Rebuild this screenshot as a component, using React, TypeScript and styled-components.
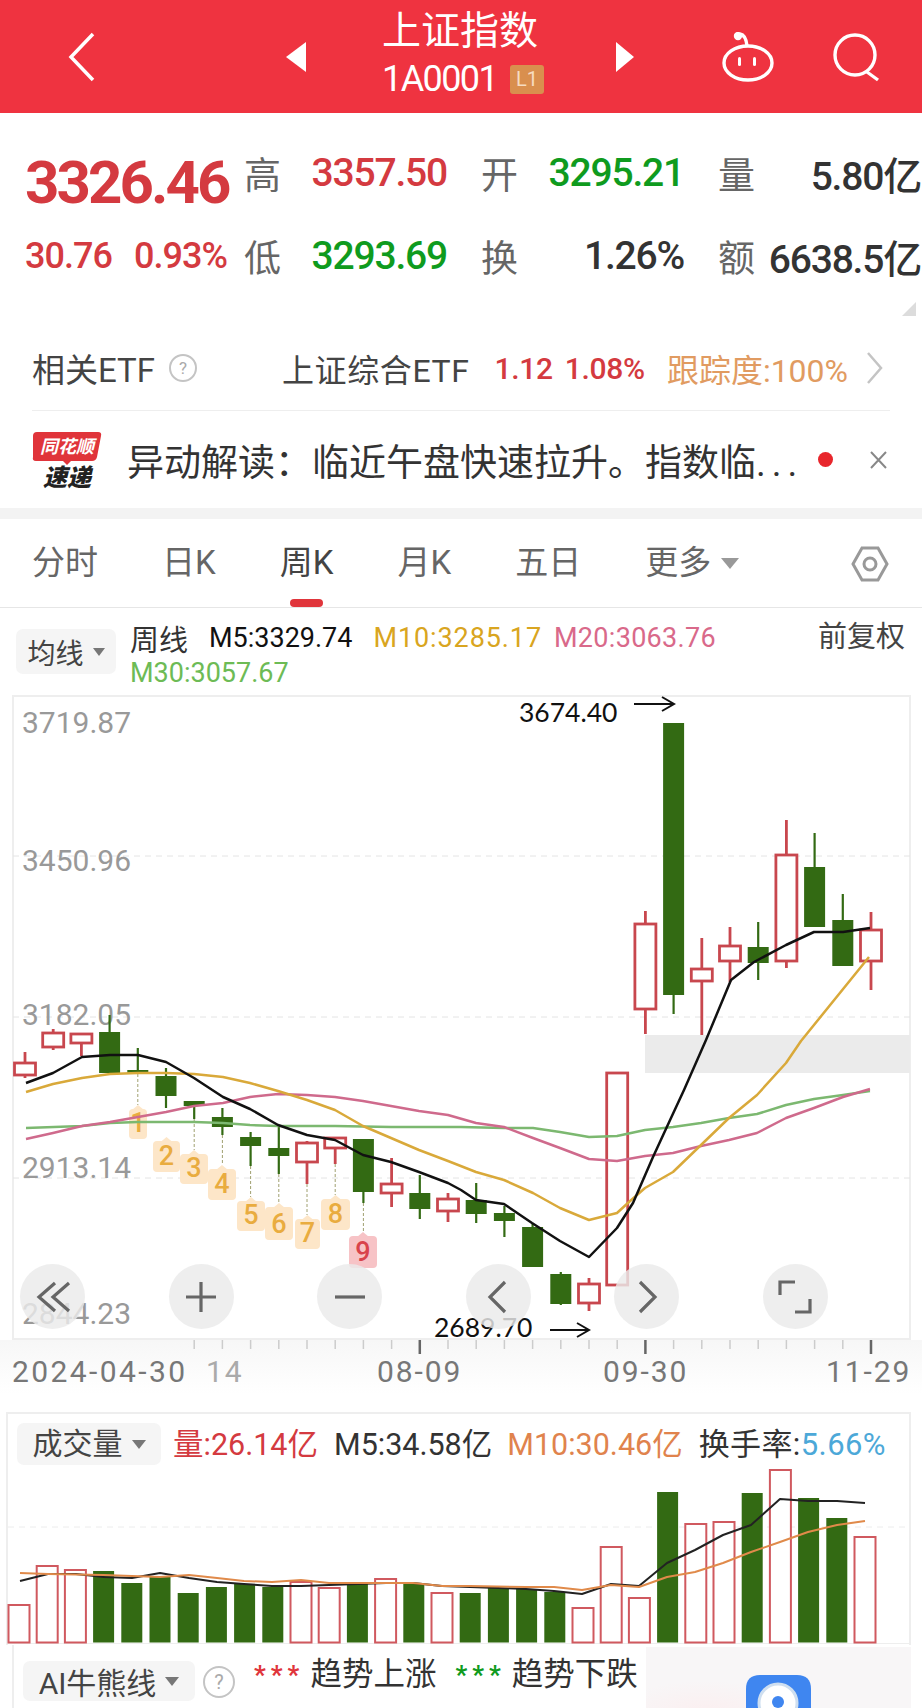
import React from 'react';
import styled, { createGlobalStyle } from 'styled-components';

const RED = '#d43a40';
const GREEN = '#0f9b1e';
const CANDLE_RED = '#c8474e';
const CANDLE_GREEN = '#336a13';

const GlobalStyle = createGlobalStyle`
  *, *::before, *::after {
    box-sizing: border-box;
  }
  html, body {
    margin: 0;
    padding: 0;
    background: #fff;
    overflow: hidden;
  }
  body {
    font-family: Roboto, "Noto Sans CJK SC", sans-serif;
  }
`;

const Page = styled.div`
  width: 922px;
  height: 1708px;
  overflow: hidden;
  position: relative;
  background: #fff;
`;

/* header */
const Header = styled.header`
  height: 113px;
  background: #ef3340;
  display: flex;
  align-items: center;
  color: #fff;
`;

const NavIcon = styled.svg<{ $left: number }>`
  margin-left: ${(p) => p.$left}px;
  flex: none;
`;

const TitleBlock = styled.div`
  width: 162px;
  margin-left: 76px;
  height: 113px;
  display: flex;
  flex-direction: column;
`;

const Title = styled.div`
  font-size: 39px;
  line-height: 44px;
  margin-top: 9px;
  height: 50px;
`;

const CodeRow = styled.div`
  display: flex;
  align-items: center;
  gap: 13px;
  font-size: 36px;
  letter-spacing: -1.6px;
  line-height: 40px;
`;

const LevelBadge = styled.span`
  width: 37px;
  height: 29px;
  background: #d98f4e;
  color: #f7dcc0;
  border-radius: 3px;
  font-size: 20px;
  letter-spacing: 0;
  line-height: 29px;
  text-align: center;
`;

/* quote */
const Stats = styled.section`
  position: relative;
  height: 213px;
  padding: 18px 0 0 25px;
  display: grid;
  grid-template-columns: 185px repeat(3, 203px);
  grid-auto-rows: 83px;
  column-gap: 34px;
`;

const Price = styled.div`
  font-size: 60px;
  line-height: 60px;
  font-weight: 700;
  color: ${RED};
  align-self: end;
  margin-bottom: 1px;
  letter-spacing: -2.9px;
  white-space: nowrap;
`;

const Change = styled.div`
  display: flex;
  justify-content: space-between;
  align-items: center;
  width: 202px;
  font-size: 36px;
  font-weight: 500;
  letter-spacing: -1px;
  color: ${RED};
`;

const Stat = styled.div`
  display: flex;
  justify-content: space-between;
  align-items: center;
`;

const StatLabel = styled.span`
  font-size: 37px;
  color: #666;
`;

const StatValue = styled.span<{ $color?: string }>`
  font-size: 39px;
  font-weight: 500;
  letter-spacing: -1.2px;
  color: ${(p) => p.$color || '#333'};
`;

const Corner = styled.i`
  position: absolute;
  right: 6px;
  bottom: 10px;
  width: 14px;
  height: 14px;
  background: #dcdcdc;
  clip-path: polygon(100% 0, 100% 100%, 0 100%);
`;

/* etf row */
const EtfRow = styled.section`
  height: 85px;
  margin: 0 32px;
  border-bottom: 1px solid #eee;
  display: flex;
  align-items: center;
  font-size: 33px;
  color: #444;
`;

const Help = styled.span<{ $size: number }>`
  width: ${(p) => p.$size}px;
  height: ${(p) => p.$size}px;
  border: 2px solid #c4c4c4;
  border-radius: 50%;
  color: #aaa;
  font-size: ${(p) => Math.round(p.$size * 0.62)}px;
  line-height: ${(p) => p.$size - 4}px;
  text-align: center;
  display: block;
  flex: none;
`;

const EtfHelp = styled.div`
  margin-left: 14px;
`;

const EtfName = styled.span`
  margin-left: 85px;
  font-size: 32px;
  letter-spacing: 0.6px;
`;

const EtfQuote = styled.span<{ $left: number }>`
  margin-left: ${(p) => p.$left}px;
  font-size: 30px;
  font-weight: 500;
  letter-spacing: -0.3px;
  color: ${RED};
`;

const EtfTrack = styled.span`
  margin-left: 22px;
  font-size: 32px;
  color: #e19b61;
  white-space: nowrap;
`;

/* news row */
const NewsRow = styled.section`
  height: 97px;
  padding-left: 32px;
  display: flex;
  align-items: center;
  color: #333;
`;

const LogoSvg = styled.svg`
  overflow: visible;
  flex: none;
`;

const NewsText = styled.div`
  margin-left: 25px;
  width: 677px;
  font-size: 37px;
  white-space: nowrap;
`;

const NewsEllipsis = styled.span`
  letter-spacing: 6px;
`;

const NewsDot = styled.i`
  margin-left: 14px;
  width: 15px;
  height: 15px;
  border-radius: 50%;
  background: #e8262c;
`;

const Band = styled.div`
  height: 11px;
  background: #f3f3f3;
`;

/* tabs */
const Tabs = styled.nav`
  height: 89px;
  border-bottom: 1px solid #e6e6e6;
  padding-left: 32px;
  display: flex;
  gap: 64px;
  position: relative;
`;

const Tab = styled.div<{ $active?: boolean }>`
  position: relative;
  font-size: 33px;
  line-height: 88px;
  color: ${(p) => (p.$active ? '#444' : '#666')};
  &::after {
    content: '';
    display: ${(p) => (p.$active ? 'block' : 'none')};
    position: absolute;
    bottom: 0;
    left: 50%;
    margin-left: -17px;
    width: 33px;
    height: 8px;
    border-radius: 4px;
    background: #e0353b;
  }
`;

const Caret = styled.i<{ $size: number; $color?: string }>`
  display: inline-block;
  border-left: ${(p) => p.$size}px solid transparent;
  border-right: ${(p) => p.$size}px solid transparent;
  border-top: ${(p) => Math.round(p.$size * 1.25)}px solid ${(p) => p.$color || '#777'};
`;

const MoreTab = styled(Tab)`
  display: flex;
  align-items: center;
  gap: 10px;
`;

const SettingsIcon = styled.svg`
  position: absolute;
  left: 851px;
  top: 26px;
`;

/* legend */
const Legend = styled.section`
  height: 87px;
  display: flex;
  align-items: flex-start;
  padding: 12px 17px 0 16px;
`;

const Dropdown = styled.div<{ $width: number; $height: number; $font: number }>`
  width: ${(p) => p.$width}px;
  height: ${(p) => p.$height}px;
  background: #f5f5f5;
  border-radius: 7px;
  display: flex;
  align-items: center;
  justify-content: center;
  gap: 9px;
  font-size: ${(p) => p.$font}px;
  color: #444;
  flex: none;
  white-space: nowrap;
`;

const LegendDropdown = styled(Dropdown)`
  margin-top: 9px;
`;

const MaBlock = styled.div`
  margin-left: 14px;
  flex: 1;
`;

const MaLine = styled.div`
  display: flex;
  align-items: center;
  height: 35px;
  font-size: 27px;
  gap: 21px;
`;

const MaText = styled.span<{ $color: string; $wide?: boolean; $track?: number; $pull?: number }>`
  color: ${(p) => p.$color};
  font-size: ${(p) => (p.$wide ? 29 : 27)}px;
  letter-spacing: ${(p) => p.$track || 0}px;
  margin-left: ${(p) => p.$pull || 0}px;
  white-space: nowrap;
`;

const Adjust = styled.div`
  font-size: 29px;
  line-height: 35px;
  color: #444;
`;

/* chart */
const ChartPanel = styled.section`
  position: relative;
  margin-left: 12px;
  width: 899px;
  height: 645px;
`;

const ChartSvg = styled.svg`
  display: block;
  overflow: visible;
`;

const Controls = styled.div`
  position: absolute;
  left: 8px;
  top: 569px;
  display: flex;
  gap: 83.6px;
`;

const RoundButton = styled.div`
  width: 65px;
  height: 65px;
  border-radius: 50%;
  background: rgba(234, 234, 234, 0.82);
  display: flex;
  align-items: center;
  justify-content: center;
`;

const XAxis = styled.div`
  height: 72px;
  padding: 14px 0 0 12px;
  display: grid;
  grid-template-columns: 194px 171px 226px 223px 1fr;
  font-size: 30px;
  letter-spacing: 1.9px;
  line-height: 36px;
  color: #777;
  background: linear-gradient(180deg, #f7f7f7 0, #fff 75%);
`;

const XLabel = styled.span<{ $faded?: boolean; $spread?: boolean }>`
  color: ${(p) => (p.$faded ? '#aaa' : '#777')};
  letter-spacing: ${(p) => (p.$spread ? 2.4 : 1.9)}px;
  white-space: nowrap;
`;

/* volume */
const VolumePanel = styled.section`
  margin-left: 6px;
  width: 905px;
  height: 233px;
  border: 2px solid #eee;
  border-bottom: 0;
`;

const VolumeHead = styled.div`
  height: 56px;
  padding: 9px 0 0 9px;
  display: flex;
  align-items: flex-start;
  font-size: 30.5px;
  line-height: 44px;
  color: #333;
  white-space: nowrap;
`;

const VolumeItem = styled.span<{ $color?: string; $left: number }>`
  margin-left: ${(p) => p.$left}px;
  color: ${(p) => p.$color || '#333'};
`;

const TurnoverItem = styled(VolumeItem)`
  font-size: 31px;
  letter-spacing: 0.4px;
`;

const Turnover = styled.span`
  color: #4ca8d8;
`;

/* bottom */
const BottomBar = styled.section`
  margin: 0 11px 0 12px;
  height: 63px;
  border-left: 2px solid #eee;
  display: flex;
  align-items: flex-start;
`;

const BottomDropdown = styled(Dropdown)`
  margin: 16px 0 0 9px;
`;

const BottomHelp = styled.div`
  margin: 21px 0 0 8px;
  flex: none;
`;

const Trend = styled.div<{ $left: number }>`
  display: flex;
  align-items: center;
  gap: 6px;
  margin: 8px 0 0 ${(p) => p.$left}px;
  font-size: 31.5px;
  line-height: 44px;
  color: #333;
  white-space: nowrap;
  flex: none;
`;

const TrendStars = styled.span<{ $color: string }>`
  color: ${(p) => p.$color};
  font-size: 26px;
  font-weight: 700;
  letter-spacing: 5px;
`;

const Promo = styled.div`
  margin-left: auto;
  margin-top: 2px;
  width: 265px;
  height: 61px;
  padding: 28px 0 0 100px;
  background: radial-gradient(ellipse 90px 30px at 60px 64px, #fbeff0, #f8f6f7 100%);
`;

type Candle = [boolean, number, number, number, number];

// [up, body top, body bottom, wick top, wick bottom] in page px
const candles: Candle[] = [
  [true, 1063, 1075, 1052, 1078],
  [true, 1033, 1047, 1029, 1050],
  [true, 1034, 1043, 1033, 1056],
  [false, 1032, 1073, 1015, 1073],
  [false, 1070, 1073, 1048, 1074],
  [false, 1076, 1096, 1068, 1108],
  [false, 1101, 1106, 1101, 1119],
  [false, 1117, 1127, 1108, 1135],
  [false, 1137, 1146, 1132, 1166],
  [false, 1148, 1156, 1127, 1174],
  [true, 1143, 1162, 1141, 1184],
  [true, 1138, 1148, 1137, 1164],
  [false, 1139, 1192, 1139, 1203],
  [true, 1184, 1193, 1158, 1207],
  [false, 1193, 1209, 1175, 1219],
  [true, 1199, 1211, 1193, 1222],
  [false, 1200, 1214, 1183, 1223],
  [false, 1213, 1221, 1206, 1237],
  [false, 1227, 1267, 1224, 1267],
  [false, 1274, 1304, 1272, 1305],
  [true, 1284, 1303, 1278, 1311],
  [true, 1073, 1285, 1073, 1285],
  [true, 924, 1009, 911, 1034],
  [false, 723, 995, 723, 1014],
  [true, 969, 981, 938, 1035],
  [true, 946, 961, 927, 982],
  [false, 947, 963, 922, 980],
  [true, 855, 961, 820, 968],
  [false, 867, 927, 833, 927],
  [false, 920, 966, 894, 966],
  [true, 930, 961, 912, 990],
];

const candleX = (i: number) => 25 + 28.2 * i;

const ma5 = '26,1083 53,1073 82,1057 110,1055 138,1055 166,1062 194,1078 223,1097 250,1109 278,1125 307,1135 335,1140 363,1155 391,1162 419,1172 448,1183 461,1190 476,1200 504,1204 532,1223 560,1241 589,1257 617,1228 633,1203 653,1157 671,1118 684,1090 706,1040 731,980 754,962 786,945 814,932 843,932 870,928';
const ma10 = '26,1092 53,1084 82,1078 110,1074 138,1073 166,1073 194,1074 223,1077 250,1083 278,1091 307,1100 335,1110 363,1126 391,1138 419,1150 448,1161 476,1172 504,1180 533,1193 560,1208 589,1220 617,1213 629,1202 645,1188 673,1172 701,1145 729,1118 757,1095 786,1063 801,1041 869,957';
const ma20 = '26,1139 53,1133 82,1126 110,1122 138,1117 166,1112 194,1106 223,1103 250,1097 278,1094 307,1095 335,1097 363,1101 391,1106 419,1111 448,1115 476,1123 504,1127 533,1138 560,1148 589,1159 617,1161 645,1156 673,1153 701,1146 729,1140 757,1133 786,1118 814,1108 843,1097 870,1089';
const ma30 = '26,1128 82,1126 110,1123 138,1122 194,1122 223,1123 250,1125 278,1126 335,1126 391,1127 461,1127 504,1128 533,1128 560,1132 589,1137 617,1136 645,1130 673,1127 701,1123 729,1118 757,1114 786,1105 814,1099 843,1095 870,1091';

const yLabels: [string, number][] = [
  ['3719.87', 733],
  ['3450.96', 871],
  ['3182.05', 1025],
  ['2913.14', 1178],
  ['2844.23', 1324],
];

// [number, left, right, top, bottom, wick index it hangs from]
const tags: [string, number, number, number, number, number][] = [
  ['1', 129, 147, 1105, 1139, 4],
  ['2', 153, 180, 1137, 1172, -1],
  ['3', 180, 208, 1150, 1184, 6],
  ['4', 208, 236, 1165, 1200, 7],
  ['5', 237, 265, 1197, 1231, 8],
  ['6', 265, 293, 1203, 1240, 9],
  ['7', 295, 320, 1215, 1249, 10],
  ['8', 321, 350, 1195, 1230, 11],
  ['9', 349, 377, 1232, 1268, 12],
];

// bar tops, bars stand on page y 1643
const barTops = [
  1605, 1566, 1570, 1571, 1583, 1577, 1593, 1587, 1584, 1587, 1582, 1588, 1584, 1579, 1584, 1593,
  1593, 1588, 1589, 1592, 1608, 1547, 1598, 1492, 1524, 1522, 1493, 1470, 1498, 1518, 1537,
];

const volMa5 = '20,1581 48,1574 76,1574 104,1577 132,1578 160,1573 189,1578 217,1582 244,1584 272,1586 301,1586 329,1585 358,1584 386,1583 413,1583 442,1586 470,1587 498,1588 526,1589 554,1591 582,1594 611,1584 639,1586 667,1563 695,1550 723,1535 751,1525 780,1499 808,1501 837,1501 865,1503';
const volMa10 = '20,1573 48,1574 104,1575 160,1577 189,1575 217,1578 244,1581 272,1582 301,1580 329,1583 358,1583 413,1583 442,1586 470,1586 526,1587 554,1587 582,1590 611,1585 639,1587 667,1577 695,1572 723,1563 751,1552 780,1542 808,1532 837,1525 865,1521';

const Line = ({ points, color, width = 2.5 }: { points: string; color: string; width?: number }) => (
  <polyline points={points} fill="none" stroke={color} strokeWidth={width} strokeLinejoin="round" />
);

const KChart = () => (
  <ChartSvg width={899} height={645} viewBox="12 695 899 645">
    <rect x={13} y={696} width={897} height={643} fill="#fff" stroke="#eee" strokeWidth={2} />
    <rect x={645} y={1035} width={265} height={38} fill="#ebebeb" />
    {[856, 1017, 1178].map((y) => (
      <line key={y} x1={13} x2={910} y1={y} y2={y} stroke="#e4e4e4" strokeWidth={1} strokeDasharray="6 5" />
    ))}
    {yLabels.map(([label, y]) => (
      <text key={label} x={22} y={y} fontFamily="Roboto" fontSize={30} fill="#999">
        {label}
      </text>
    ))}
    {tags.map(([n, left, right, top, bottom, wick]) => {
      const cx = (left + right) / 2;
      const pink = n === '9';
      const fill = pink ? '#f7c3c6' : '#fde6c8';
      return (
        <g key={n}>
          {wick >= 0 && (
            <line
              x1={candleX(wick)}
              x2={candleX(wick)}
              y1={candles[wick][4]}
              y2={top}
              stroke="#a0a070"
              strokeWidth={1}
              strokeDasharray="3 2"
            />
          )}
          <polygon points={`${cx - 6},${top + 5} ${cx},${top} ${cx + 6},${top + 5}`} fill={fill} />
          <rect x={left} y={top + 4} width={right - left} height={bottom - top - 4} rx={4} fill={fill} />
          <text
            x={cx}
            y={bottom - 7}
            textAnchor="middle"
            fontFamily="Roboto"
            fontSize={27}
            fontWeight={500}
            fill={pink ? '#d9434b' : '#e9ac3f'}
          >
            {n}
          </text>
        </g>
      );
    })}
    {candles.map(([up, top, bottom, wickTop, wickBottom], i) => {
      const x = candleX(i);
      const color = up ? CANDLE_RED : CANDLE_GREEN;
      return (
        <g key={i}>
          <line x1={x} x2={x} y1={wickTop} y2={wickBottom} stroke={color} strokeWidth={up ? 2.8 : 2.2} />
          <rect
            x={x - 10.5}
            y={top}
            width={21}
            height={bottom - top}
            fill={up ? '#fff' : color}
            stroke={up ? color : 'none'}
            strokeWidth={up ? 2.8 : 0}
          />
        </g>
      );
    })}
    <Line points={ma30} color="#7cb870" />
    <Line points={ma20} color="#cf6a8c" />
    <Line points={ma10} color="#d9a93a" />
    <Line points={ma5} color="#111" />
    <text x={519} y={722} fontFamily="Lato" fontSize={26.5} fill="#111">
      3674.40
    </text>
    <path d="M634 704H673M662 697L674 704L662 711" fill="none" stroke="#111" strokeWidth={2} />
    <text x={434} y={1337} fontFamily="Lato" fontSize={26.5} fill="#111">
      2689.70
    </text>
    <path d="M550 1330H588M577 1323L589 1330L577 1337" fill="none" stroke="#111" strokeWidth={2} />
    {candles.map((_, i) => {
      const major = i === 14 || i === 22 || i === 30;
      if (i < 6) return null;
      return (
        <line
          key={i}
          x1={candleX(i)}
          x2={candleX(i)}
          y1={1340}
          y2={major ? 1354 : 1349}
          stroke={major ? '#666' : '#ccc'}
          strokeWidth={major ? 2.5 : 1.5}
        />
      );
    })}
  </ChartSvg>
);

const VolumeChart = () => (
  <ChartSvg width={901} height={175} viewBox="8 1470 901 175">
    <line x1={8} x2={909} y1={1527} y2={1527} stroke="#ececec" strokeWidth={1} strokeDasharray="6 5" />
    <line x1={8} x2={909} y1={1643.5} y2={1643.5} stroke="#eee" strokeWidth={1} />
    {barTops.map((top, i) => {
      const x = 19 + 28.2 * i;
      const up = candles[i][0];
      return (
        <rect
          key={i}
          x={x - 10.5}
          y={top}
          width={21}
          height={1642.5 - top}
          fill={up ? '#fff' : CANDLE_GREEN}
          stroke={up ? '#d0595f' : 'none'}
          strokeWidth={up ? 2 : 0}
        />
      );
    })}
    <Line points={volMa5} color="#222" width={2} />
    <Line points={volMa10} color="#e08a4a" width={2} />
  </ChartSvg>
);

const ButtonIcon = ({ d }: { d: string }) => (
  <svg width={40} height={40} viewBox="0 0 40 40" fill="none" stroke="#666" strokeWidth={3.2}>
    <path d={d} />
  </svg>
);

const NewsLogo = () => (
  <LogoSvg width={70} height={58} viewBox="0 0 70 58">
    <path d="M5 1H66Q70 1 69 5L65 26Q64 30 60 30H39L35 34L31 30H4Q0 30 1 26L1 5Q1 1 5 1Z" fill="#e0343a" />
    <text
      x={35}
      y={22}
      textAnchor="middle"
      fontFamily="Noto Sans CJK SC"
      fontSize={18}
      fontWeight={700}
      fontStyle="italic"
      fill="#fff"
    >
      同花顺
    </text>
    <text
      x={35}
      y={55}
      textAnchor="middle"
      fontFamily="Noto Sans CJK SC"
      fontSize={24}
      fontWeight={900}
      fontStyle="italic"
      fill="#222"
    >
      速递
    </text>
  </LogoSvg>
);

export default function App() {
  return (
    <Page>
      <GlobalStyle />
      <Header>
        <NavIcon $left={68} width={27} height={50} viewBox="0 0 27 50" fill="none" stroke="#fff" strokeWidth={3.5}>
          <path d="M25 2L3 25L25 48" />
        </NavIcon>
        <NavIcon $left={191} width={20} height={30} viewBox="0 0 20 30" fill="#fff">
          <path d="M20 0V30L0 15Z" />
        </NavIcon>
        <TitleBlock>
          <Title>上证指数</Title>
          <CodeRow>
            1A0001
            <LevelBadge>L1</LevelBadge>
          </CodeRow>
        </TitleBlock>
        <NavIcon $left={72} width={18} height={30} viewBox="0 0 18 30" fill="#fff">
          <path d="M0 0V30L18 15Z" />
        </NavIcon>
        <NavIcon $left={86} width={56} height={50} viewBox="0 0 56 50" fill="none" stroke="#fff" strokeWidth={3.4}>
          <ellipse cx={28} cy={31} rx={24} ry={17} />
          <path d="M20 2Q26 3 27 14" />
          <circle cx={18} cy={4} r={2.5} fill="#fff" />
          <rect x={18} y={25} width={3} height={9} fill="#fff" stroke="none" rx={1.5} />
          <rect x={33} y={25} width={3} height={9} fill="#fff" stroke="none" rx={1.5} />
        </NavIcon>
        <NavIcon $left={56} width={48} height={50} viewBox="0 0 48 50" fill="none" stroke="#fff" strokeWidth={3.4}>
          <circle cx={23} cy={23} r={20} />
          <path d="M35 40L46 48" />
        </NavIcon>
      </Header>

      <Stats>
        <Price>3326.46</Price>
        <Stat>
          <StatLabel>高</StatLabel>
          <StatValue $color={RED}>3357.50</StatValue>
        </Stat>
        <Stat>
          <StatLabel>开</StatLabel>
          <StatValue $color={GREEN}>3295.21</StatValue>
        </Stat>
        <Stat>
          <StatLabel>量</StatLabel>
          <StatValue>5.80亿</StatValue>
        </Stat>
        <Change>
          <span>30.76</span>
          <span>0.93%</span>
        </Change>
        <Stat>
          <StatLabel>低</StatLabel>
          <StatValue $color={GREEN}>3293.69</StatValue>
        </Stat>
        <Stat>
          <StatLabel>换</StatLabel>
          <StatValue>1.26%</StatValue>
        </Stat>
        <Stat>
          <StatLabel>额</StatLabel>
          <StatValue>6638.5亿</StatValue>
        </Stat>
        <Corner />
      </Stats>

      <EtfRow>
        <span>相关ETF</span>
        <EtfHelp>
          <Help $size={28}>?</Help>
        </EtfHelp>
        <EtfName>上证综合ETF</EtfName>
        <EtfQuote $left={25}>1.12</EtfQuote>
        <EtfQuote $left={12}>1.08%</EtfQuote>
        <EtfTrack>跟踪度:100%</EtfTrack>
        <NavIcon $left={18} width={17} height={34} viewBox="0 0 17 34" fill="none" stroke="#c4c4c4" strokeWidth={2.5}>
          <path d="M2 2L15 17L2 32" />
        </NavIcon>
      </EtfRow>

      <NewsRow>
        <NewsLogo />
        <NewsText>
          异动解读：临近午盘快速拉升。指数临<NewsEllipsis>...</NewsEllipsis>
        </NewsText>
        <NewsDot />
        <NavIcon $left={37} width={17} height={18} viewBox="0 0 17 18" fill="none" stroke="#888" strokeWidth={2}>
          <path d="M1 1L16 17M16 1L1 17" />
        </NavIcon>
      </NewsRow>

      <Band />

      <Tabs>
        <Tab>分时</Tab>
        <Tab>日K</Tab>
        <Tab $active>周K</Tab>
        <Tab>月K</Tab>
        <Tab>五日</Tab>
        <MoreTab>
          更多
          <Caret $size={9} $color="#999" />
        </MoreTab>
        <SettingsIcon width={38} height={38} viewBox="0 0 38 38" fill="none" stroke="#999" strokeWidth={3}>
          <path d="M11 3H27L36 19L27 35H11L2 19Z" />
          <circle cx={19} cy={19} r={6} />
        </SettingsIcon>
      </Tabs>

      <Legend>
        <LegendDropdown $width={100} $height={45} $font={28}>
          均线
          <Caret $size={6} />
        </LegendDropdown>
        <MaBlock>
          <MaLine>
            <MaText $color="#333" $wide>周线</MaText>
            <MaText $color="#111">M5:3329.74</MaText>
            <MaText $color="#d9a520" $track={0.9}>M10:3285.17</MaText>
            <MaText $color="#d9698a" $track={0.3} $pull={-9}>M20:3063.76</MaText>
          </MaLine>
          <MaLine>
            <MaText $color="#6dbb55">M30:3057.67</MaText>
          </MaLine>
        </MaBlock>
        <Adjust>前复权</Adjust>
      </Legend>

      <ChartPanel>
        <KChart />
        <Controls>
          <RoundButton>
            <ButtonIcon d="M22 6L6 20L22 34M36 6L20 20L36 34" />
          </RoundButton>
          <RoundButton>
            <ButtonIcon d="M20 5V35M5 20H35" />
          </RoundButton>
          <RoundButton>
            <ButtonIcon d="M5 20H35" />
          </RoundButton>
          <RoundButton>
            <ButtonIcon d="M27 5L12 20L27 35" />
          </RoundButton>
          <RoundButton>
            <ButtonIcon d="M13 5L28 20L13 35" />
          </RoundButton>
          <RoundButton>
            <ButtonIcon d="M5 18V5H20M35 22V35H20" />
          </RoundButton>
        </Controls>
      </ChartPanel>

      <XAxis>
        <XLabel $spread>2024-04-30</XLabel>
        <XLabel $faded>14</XLabel>
        <XLabel>08-09</XLabel>
        <XLabel>09-30</XLabel>
        <XLabel>11-29</XLabel>
      </XAxis>

      <VolumePanel>
        <VolumeHead>
          <Dropdown $width={144} $height={42} $font={30}>
            成交量
            <Caret $size={7} />
          </Dropdown>
          <VolumeItem $left={12} $color={RED}>量:26.14亿</VolumeItem>
          <VolumeItem $left={16}>M5:34.58亿</VolumeItem>
          <VolumeItem $left={15} $color="#e0834d">M10:30.46亿</VolumeItem>
          <TurnoverItem $left={16}>
            换手率:<Turnover>5.66%</Turnover>
          </TurnoverItem>
        </VolumeHead>
        <VolumeChart />
      </VolumePanel>

      <BottomBar>
        <BottomDropdown $width={172} $height={40} $font={30}>
          AI牛熊线
          <Caret $size={7} />
        </BottomDropdown>
        <BottomHelp>
          <Help $size={32}>?</Help>
        </BottomHelp>
        <Trend $left={19}>
          <TrendStars $color="#e0353b">***</TrendStars>
          趋势上涨
        </Trend>
        <Trend $left={19}>
          <TrendStars $color={GREEN}>***</TrendStars>
          趋势下跌
        </Trend>
        <Promo>
          <svg width={65} height={33} viewBox="0 0 65 33">
            <path d="M14 0H51Q65 0 65 14V33H0V14Q0 0 14 0Z" fill="#3f86f0" />
            <circle cx={32} cy={28} r={19} fill="#fff" stroke="#cfdff0" strokeWidth={3} />
            <circle cx={32} cy={27} r={6} fill="#3f86f0" />
          </svg>
        </Promo>
      </BottomBar>
    </Page>
  );
}
